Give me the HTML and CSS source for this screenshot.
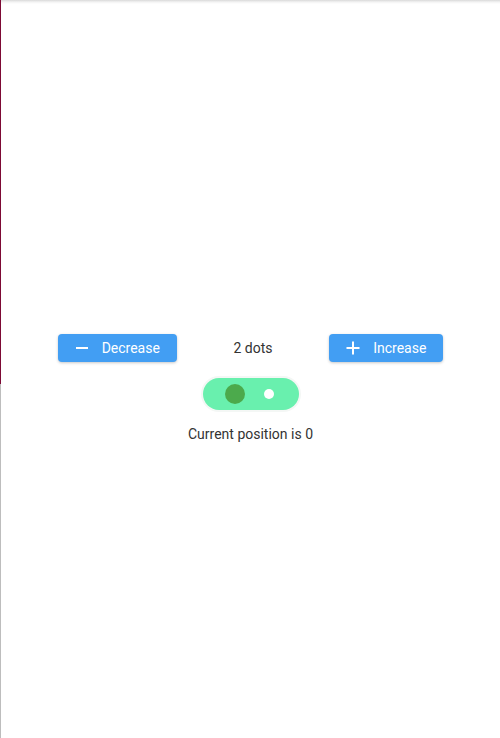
FILE: index.html
```html
<!DOCTYPE html>
<html>
<head>
<meta charset="utf-8">
<link rel="stylesheet" href="styles.css">
</head>
<body>
<div class="edge"></div>
<div class="page">
  <div class="topshade"></div>
  <main class="content">
    <div class="controls">
      <button class="btn">
        <svg class="ico" viewBox="0 0 16 16"><path d="M2 8h12" stroke="#fff" stroke-width="2"/></svg>
        <span>Decrease</span>
      </button>
      <span class="count">2 dots</span>
      <button class="btn">
        <svg class="ico" viewBox="0 0 16 16"><path d="M1.5 8h13M8 1.5v13" stroke="#fff" stroke-width="2"/></svg>
        <span>Increase</span>
      </button>
    </div>
    <div class="pill-ring">
      <div class="pill">
        <span class="dot dot-active"></span>
        <span class="dot dot-idle"></span>
      </div>
    </div>
    <p class="status">Current position is 0</p>
  </main>
</div>
</body>
</html>
```
FILE: styles.css
```css
html, body {
  margin: 0;
  padding: 0;
  height: 738px;
  overflow: hidden;
  background: #fff;
}
body {
  display: flex;
  font-family: Roboto, "Liberation Sans", sans-serif;
  font-size: 14px;
  color: #333;
}
.edge {
  width: 1px;
  flex: none;
  background: linear-gradient(#7d0a35 0 384px, #bdbdbd 384px);
}
.page {
  flex: 1;
  display: flex;
  flex-direction: column;
}
.topshade {
  height: 4px;
  flex: none;
  background: linear-gradient(#d9d9d9, #f3f3f3 50%, #fff);
}
.content {
  padding-top: 330px;
  display: flex;
  flex-direction: column;
  align-items: center;
}
.controls {
  width: 100%;
  display: flex;
  justify-content: space-evenly;
  align-items: center;
}
.btn {
  height: 28px;
  display: flex;
  align-items: center;
  gap: 12px;
  padding: 0 17px 0 16px;
  border: none;
  border-radius: 4px;
  background: #429ef3;
  color: #fff;
  font-family: Roboto, "Liberation Sans", sans-serif;
  font-size: 14px;
  box-shadow: 0 1px 3px rgba(0,0,0,0.22);
}
.ico {
  width: 16px;
  height: 16px;
  display: block;
}
.count {
  line-height: 28px;
}
.pill-ring {
  margin-top: 14px;
  padding: 2px;
  border-radius: 20px;
  background: #f4f7f5;
}
.pill {
  width: 96px;
  height: 32px;
  border-radius: 16px;
  background: #69f0ae;
  display: flex;
  align-items: center;
  box-sizing: border-box;
  padding-left: 22px;
}
.dot {
  border-radius: 50%;
  display: block;
}
.dot-active {
  width: 20px;
  height: 20px;
  background: #4caa4c;
}
.dot-idle {
  width: 10px;
  height: 10px;
  background: #fff;
  margin-left: 19px;
}
.status {
  margin: 12px 0 0;
  line-height: 20px;
}
```
